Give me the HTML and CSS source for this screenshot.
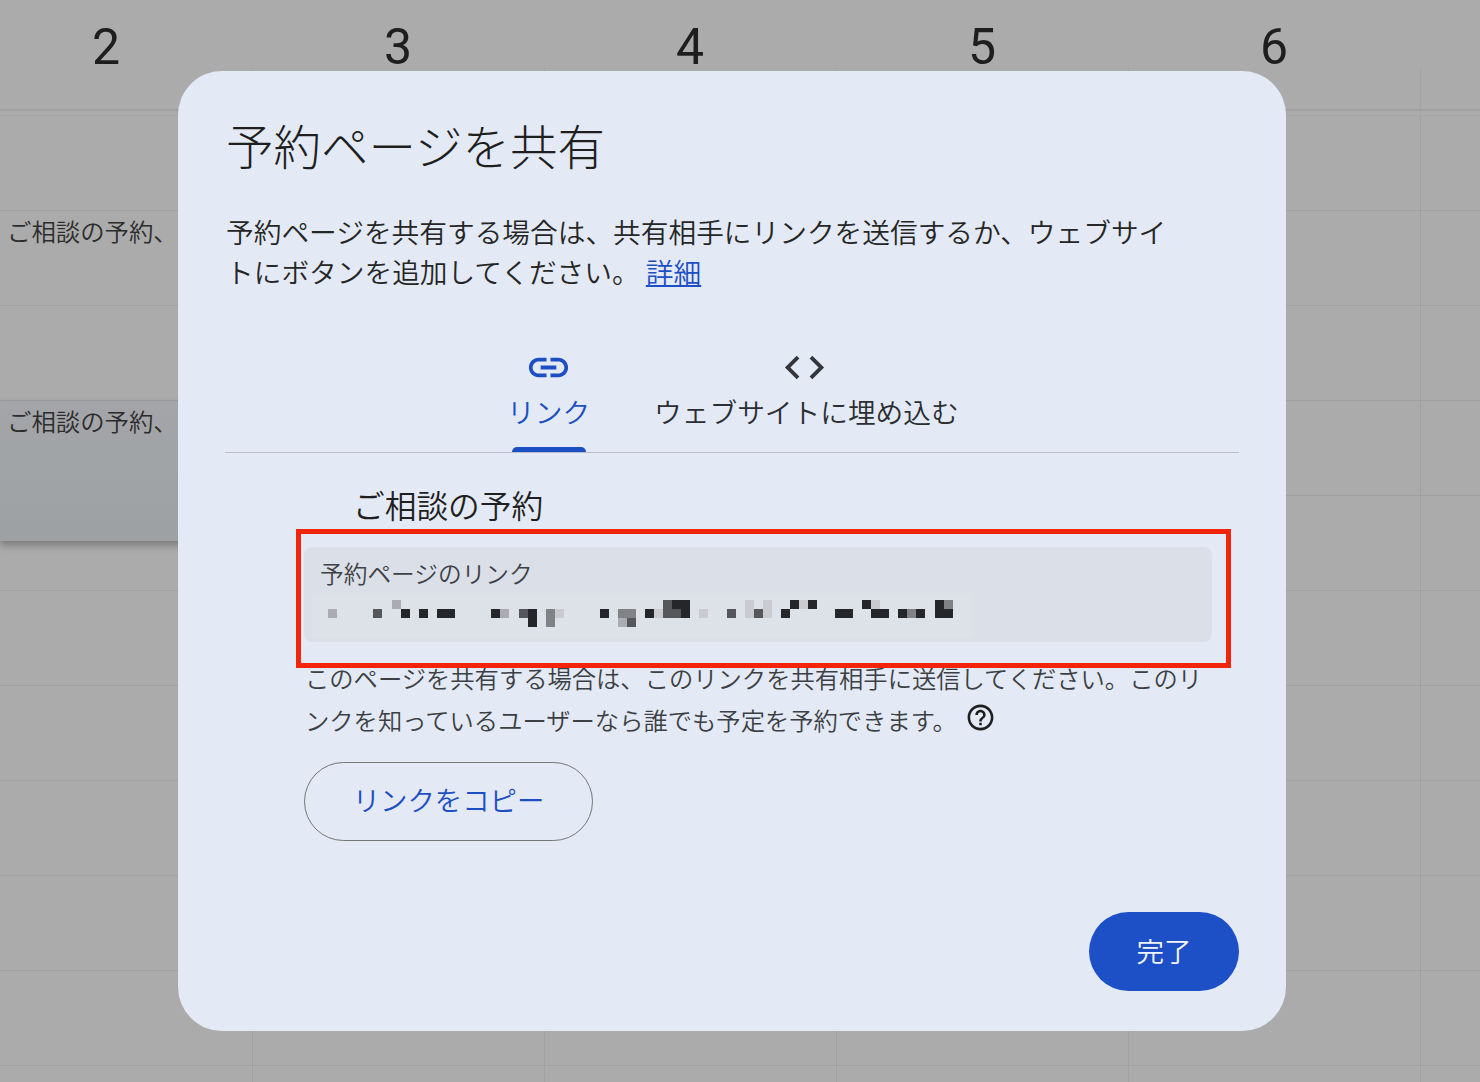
FILE: index.html
```html
<!DOCTYPE html>
<html lang="ja">
<head>
<meta charset="utf-8">
<title>予約ページを共有</title>
<link rel="stylesheet" href="styles.css">
</head>
<body>
<div class="page">
  <div class="calendar">
    <div class="cal-head">
      <div class="day">2</div>
      <div class="day">3</div>
      <div class="day">4</div>
      <div class="day">5</div>
      <div class="day">6</div>
      <div class="day"></div>
    </div>
    <div class="cal-body">
      <div class="event event-first">ご相談の予約、</div>
      <div class="event event-second">ご相談の予約、</div>
    </div>
  </div>

  <section class="modal">
    <h1 class="title">予約ページを共有</h1>
    <p class="desc">予約ページを共有する場合は、共有相手にリンクを送信するか、ウェブサイトにボタンを追加してください。 <a class="more" href="#">詳細</a></p>

    <div class="tabs">
      <div class="tab tab-active">
        <svg class="tab-icon" viewBox="0 0 24 24"><path d="M3.9 12c0-1.71 1.39-3.1 3.1-3.1h4V7H7c-2.76 0-5 2.24-5 5s2.24 5 5 5h4v-1.9H7c-1.71 0-3.1-1.39-3.1-3.1zM8 13h8v-2H8v2zm9-6h-4v1.9h4c1.71 0 3.1 1.39 3.1 3.1s-1.39 3.1-3.1 3.1h-4V17h4c2.76 0 5-2.24 5-5s-2.24-5-5-5z"/></svg>
        <span class="tab-label">リンク</span>
      </div>
      <div class="tab tab-embed">
        <svg class="tab-icon" viewBox="0 0 24 24"><path d="M9.4 16.6L4.8 12l4.6-4.6L8 6l-6 6 6 6 1.4-1.4zm5.2 0l4.6-4.6-4.6-4.6L16 6l6 6-6 6-1.4-1.4z"/></svg>
        <span class="tab-label">ウェブサイトに埋め込む</span>
      </div>
    </div>

    <div class="panel">
      <h2 class="panel-title">ご相談の予約</h2>
      <div class="field">
        <div class="field-label">予約ページのリンク</div>
        <svg class="mosaic" viewBox="0 0 660 45" shape-rendering="crispEdges">
          <rect class="m-strip" x="0" y="0" width="660" height="45"/>
          <g transform="translate(16 7)">
            <rect class="m-4" x="0" y="9" width="9" height="9"/>
            <rect class="m-2" x="45" y="9" width="9" height="9"/>
            <rect class="m-4" x="64" y="0" width="9" height="9"/>
            <rect class="m-1" x="73" y="9" width="9" height="9"/>
            <rect class="m-1" x="91" y="9" width="9" height="9"/>
            <rect class="m-1" x="109" y="9" width="18" height="9"/>
            <rect class="m-1" x="163" y="9" width="9" height="9"/>
            <rect class="m-4" x="172" y="9" width="9" height="9"/>
            <rect class="m-2" x="191" y="9" width="9" height="9"/>
            <rect class="m-1" x="200" y="9" width="9" height="18"/>
            <rect class="m-3" x="218" y="9" width="9" height="18"/>
            <rect class="m-5" x="227" y="9" width="9" height="9"/>
            <rect class="m-1" x="272" y="9" width="9" height="9"/>
            <rect class="m-3" x="290" y="9" width="18" height="9"/>
            <rect class="m-4" x="290" y="18" width="9" height="9"/>
            <rect class="m-2" x="299" y="18" width="9" height="9"/>
            <rect class="m-1" x="317" y="9" width="9" height="9"/>
            <rect class="m-5" x="326" y="9" width="9" height="9"/>
            <rect class="m-2" x="335" y="0" width="9" height="18"/>
            <rect class="m-1" x="344" y="0" width="9" height="9"/>
            <rect class="m-2" x="344" y="9" width="9" height="9"/>
            <rect class="m-1" x="353" y="0" width="9" height="18"/>
            <rect class="m-5" x="371" y="9" width="9" height="9"/>
            <rect class="m-2" x="399" y="9" width="9" height="9"/>
            <rect class="m-5" x="417" y="0" width="9" height="18"/>
            <rect class="m-2" x="426" y="9" width="9" height="9"/>
            <rect class="m-5" x="435" y="0" width="9" height="18"/>
            <rect class="m-1" x="453" y="9" width="9" height="9"/>
            <rect class="m-1" x="462" y="0" width="9" height="9"/>
            <rect class="m-5" x="471" y="0" width="9" height="9"/>
            <rect class="m-1" x="480" y="0" width="9" height="9"/>
            <rect class="m-1" x="507" y="9" width="18" height="9"/>
            <rect class="m-1" x="534" y="0" width="9" height="9"/>
            <rect class="m-5" x="543" y="0" width="9" height="9"/>
            <rect class="m-1" x="543" y="9" width="18" height="9"/>
            <rect class="m-1" x="570" y="9" width="9" height="9"/>
            <rect class="m-3" x="579" y="9" width="9" height="9"/>
            <rect class="m-1" x="588" y="9" width="9" height="9"/>
            <rect class="m-1" x="607" y="0" width="9" height="18"/>
            <rect class="m-3" x="616" y="0" width="9" height="9"/>
            <rect class="m-1" x="616" y="9" width="9" height="9"/>
          </g>
        </svg>
        <div class="annotation"></div>
      </div>
      <p class="help">このページを共有する場合は、このリンクを共有相手に送信してください。このリンクを知っているユーザーなら誰でも予定を予約できます。 <svg class="help-icon" viewBox="0 0 24 24"><path d="M11 18h2v-2h-2v2zm1-16C6.48 2 2 6.48 2 12s4.48 10 10 10 10-4.48 10-10S17.52 2 12 2zm0 18c-4.41 0-8-3.59-8-8s3.59-8 8-8 8 3.59 8 8-3.59 8-8 8zm0-14c-2.21 0-4 1.79-4 4h2c0-1.1.9-2 2-2s2 .9 2 2c0 2-3 1.75-3 5h2c0-2.25 3-2.5 3-5 0-2.21-1.79-4-4-4z"/></svg></p>
      <button class="btn-copy" type="button">リンクをコピー</button>
    </div>

    <div class="footer">
      <button class="btn-done" type="button">完了</button>
    </div>
  </section>
</div>
</body>
</html>
```

FILE: styles.css
```css
* { box-sizing: border-box; }
html, body { margin: 0; padding: 0; }
body {
  font-family: "Noto Sans CJK JP", "Noto Sans", sans-serif;
  font-weight: 350;
  background: #ababab;
}
.page {
  position: relative;
  width: 1480px;
  height: 1082px;
  overflow: hidden;
  background: #ababab;
}

/* Calendar behind the dialog */
.calendar { width: 1480px; height: 1082px; display: flex; flex-direction: column; }
.cal-head {
  display: grid;
  grid-template-columns: repeat(6, 292px);
  margin-left: -40px;
  height: 111px;
  flex: none;
  border-bottom: 2px solid #a0a0a0;
  background: linear-gradient(to left, #a2a3a3 1.5px, transparent 1.5px) 1px 68px / 292px 42px repeat-x;
}
.day {
  font-family: Roboto, "Liberation Sans", sans-serif;
  font-size: 50px;
  font-weight: 400;
  line-height: 95.5px;
  text-align: center;
  color: #1e1e1e;
}
.cal-body {
  flex: 1;
  margin-top: 4px;
  border-top: 1px solid #a6a6a6;
  display: flex;
  flex-direction: column;
  background-image:
    linear-gradient(to bottom, transparent 94px, #a0a1a1 94px),
    linear-gradient(to left, #a0a1a1 1.5px, transparent 1.5px);
  background-size: 100% 95px, 292px 100%;
  background-position: 0 0, -39px 0;
}
.event {
  width: 178px;
  padding-left: 7px;
  font-size: 24.4px;
  line-height: 40px;
  color: #2c2c2c;
  white-space: nowrap;
}
.event-first { height: 95px; margin-top: 95px; }
.event-second {
  height: 140px;
  margin-top: 95px;
  width: 200px;
  background: linear-gradient(#a3a5a8, #9ea1a4);
  box-shadow: 0 4px 8px rgba(0, 0, 0, .3);
}

/* Dialog */
.modal {
  position: absolute;
  left: 178px;
  top: 71px;
  width: 1108px;
  height: 960px;
  padding: 46px 47px 0;
  border-radius: 44px;
  background: #e4eaf5;
  color: #1f1f1f;
}
.title {
  margin: 0 0 0 1px;
  font-size: 47.5px;
  font-weight: 300;
  line-height: 56px;
  white-space: nowrap;
}
.desc {
  width: 945px;
  margin: 38px 0 0 1px;
  font-size: 27.7px;
  line-height: 40px;
  color: #262626;
}
.more { color: #1c4fc4; text-decoration: underline; }

.tabs {
  display: flex;
  justify-content: flex-start;
  gap: 64px;
  height: 108px;
  margin-top: 54px;
  padding-left: 282px;
  border-bottom: 1px solid #b9bdc4;
}
.tab {
  position: relative;
  display: flex;
  flex-direction: column;
  align-items: center;
  color: #2b2e33;
}
.tab-icon { width: 47px; height: 47px; flex: none; margin-top: -1px; fill: #33373c; }
.tab-embed .tab-icon { margin-right: 3px; }
.tab-label {
  font-size: 27.7px;
  line-height: 40px;
  white-space: nowrap;
}
.tab-active { color: #1c4fc4; }
.tab-active .tab-icon { fill: #1c4fc4; }
.tab-active::after {
  content: "";
  position: absolute;
  left: 5px;
  right: 4px;
  bottom: 0;
  height: 5px;
  border-radius: 5px 5px 0 0;
  background: #1c4fc4;
}

.panel { padding-left: 79px; }
.panel-title {
  margin: 31px 0 0 49px;
  font-size: 31.7px;
  font-weight: 350;
  line-height: 40px;
  white-space: nowrap;
}
.field {
  position: relative;
  width: 908px;
  height: 95px;
  margin-top: 23px;
  padding: 9px 0 0 16px;
  border-radius: 8px;
  background: #dbdfe7;
}
.field-label {
  font-size: 23.7px;
  line-height: 34px;
  color: #3e4145;
  white-space: nowrap;
}
.mosaic {
  display: block;
  width: 660px;
  height: 45px;
  margin: 3px 0 0 -8px;
}
.m-strip { fill: #dde1e8; }
.m-1 { fill: #24262a; }
.m-2 { fill: #55575b; }
.m-3 { fill: #808286; }
.m-4 { fill: #aaacb1; }
.m-5 { fill: #c9cbd1; }
.annotation {
  position: absolute;
  left: -8px;
  right: -19px;
  top: -18px;
  bottom: -26px;
  border: 5px solid #f3240c;
}
.help {
  width: 900px;
  margin: 15px 0 0 1px;
  font-size: 24.3px;
  line-height: 42px;
  color: #3c3f43;
}
.help-icon {
  width: 31px;
  height: 31px;
  margin-left: 3px;
  vertical-align: -3px;
  fill: #1f1f1f;
}
.btn-copy {
  display: block;
  width: 289px;
  height: 79px;
  margin-top: 21px;
  padding: 0 0 5px;
  border: 1px solid #747775;
  border-radius: 40px;
  background: transparent;
  color: #1c4fc4;
  font-family: inherit;
  font-size: 27.4px;
  font-weight: 350;
}
.footer { display: flex; justify-content: flex-end; margin-top: 71px; }
.btn-done {
  width: 150px;
  height: 79px;
  padding: 0 0 4px;
  border: 0;
  border-radius: 40px;
  background: #1d4fc6;
  color: #f2f5fc;
  font-family: inherit;
  font-size: 27.6px;
  font-weight: 350;
}
```
